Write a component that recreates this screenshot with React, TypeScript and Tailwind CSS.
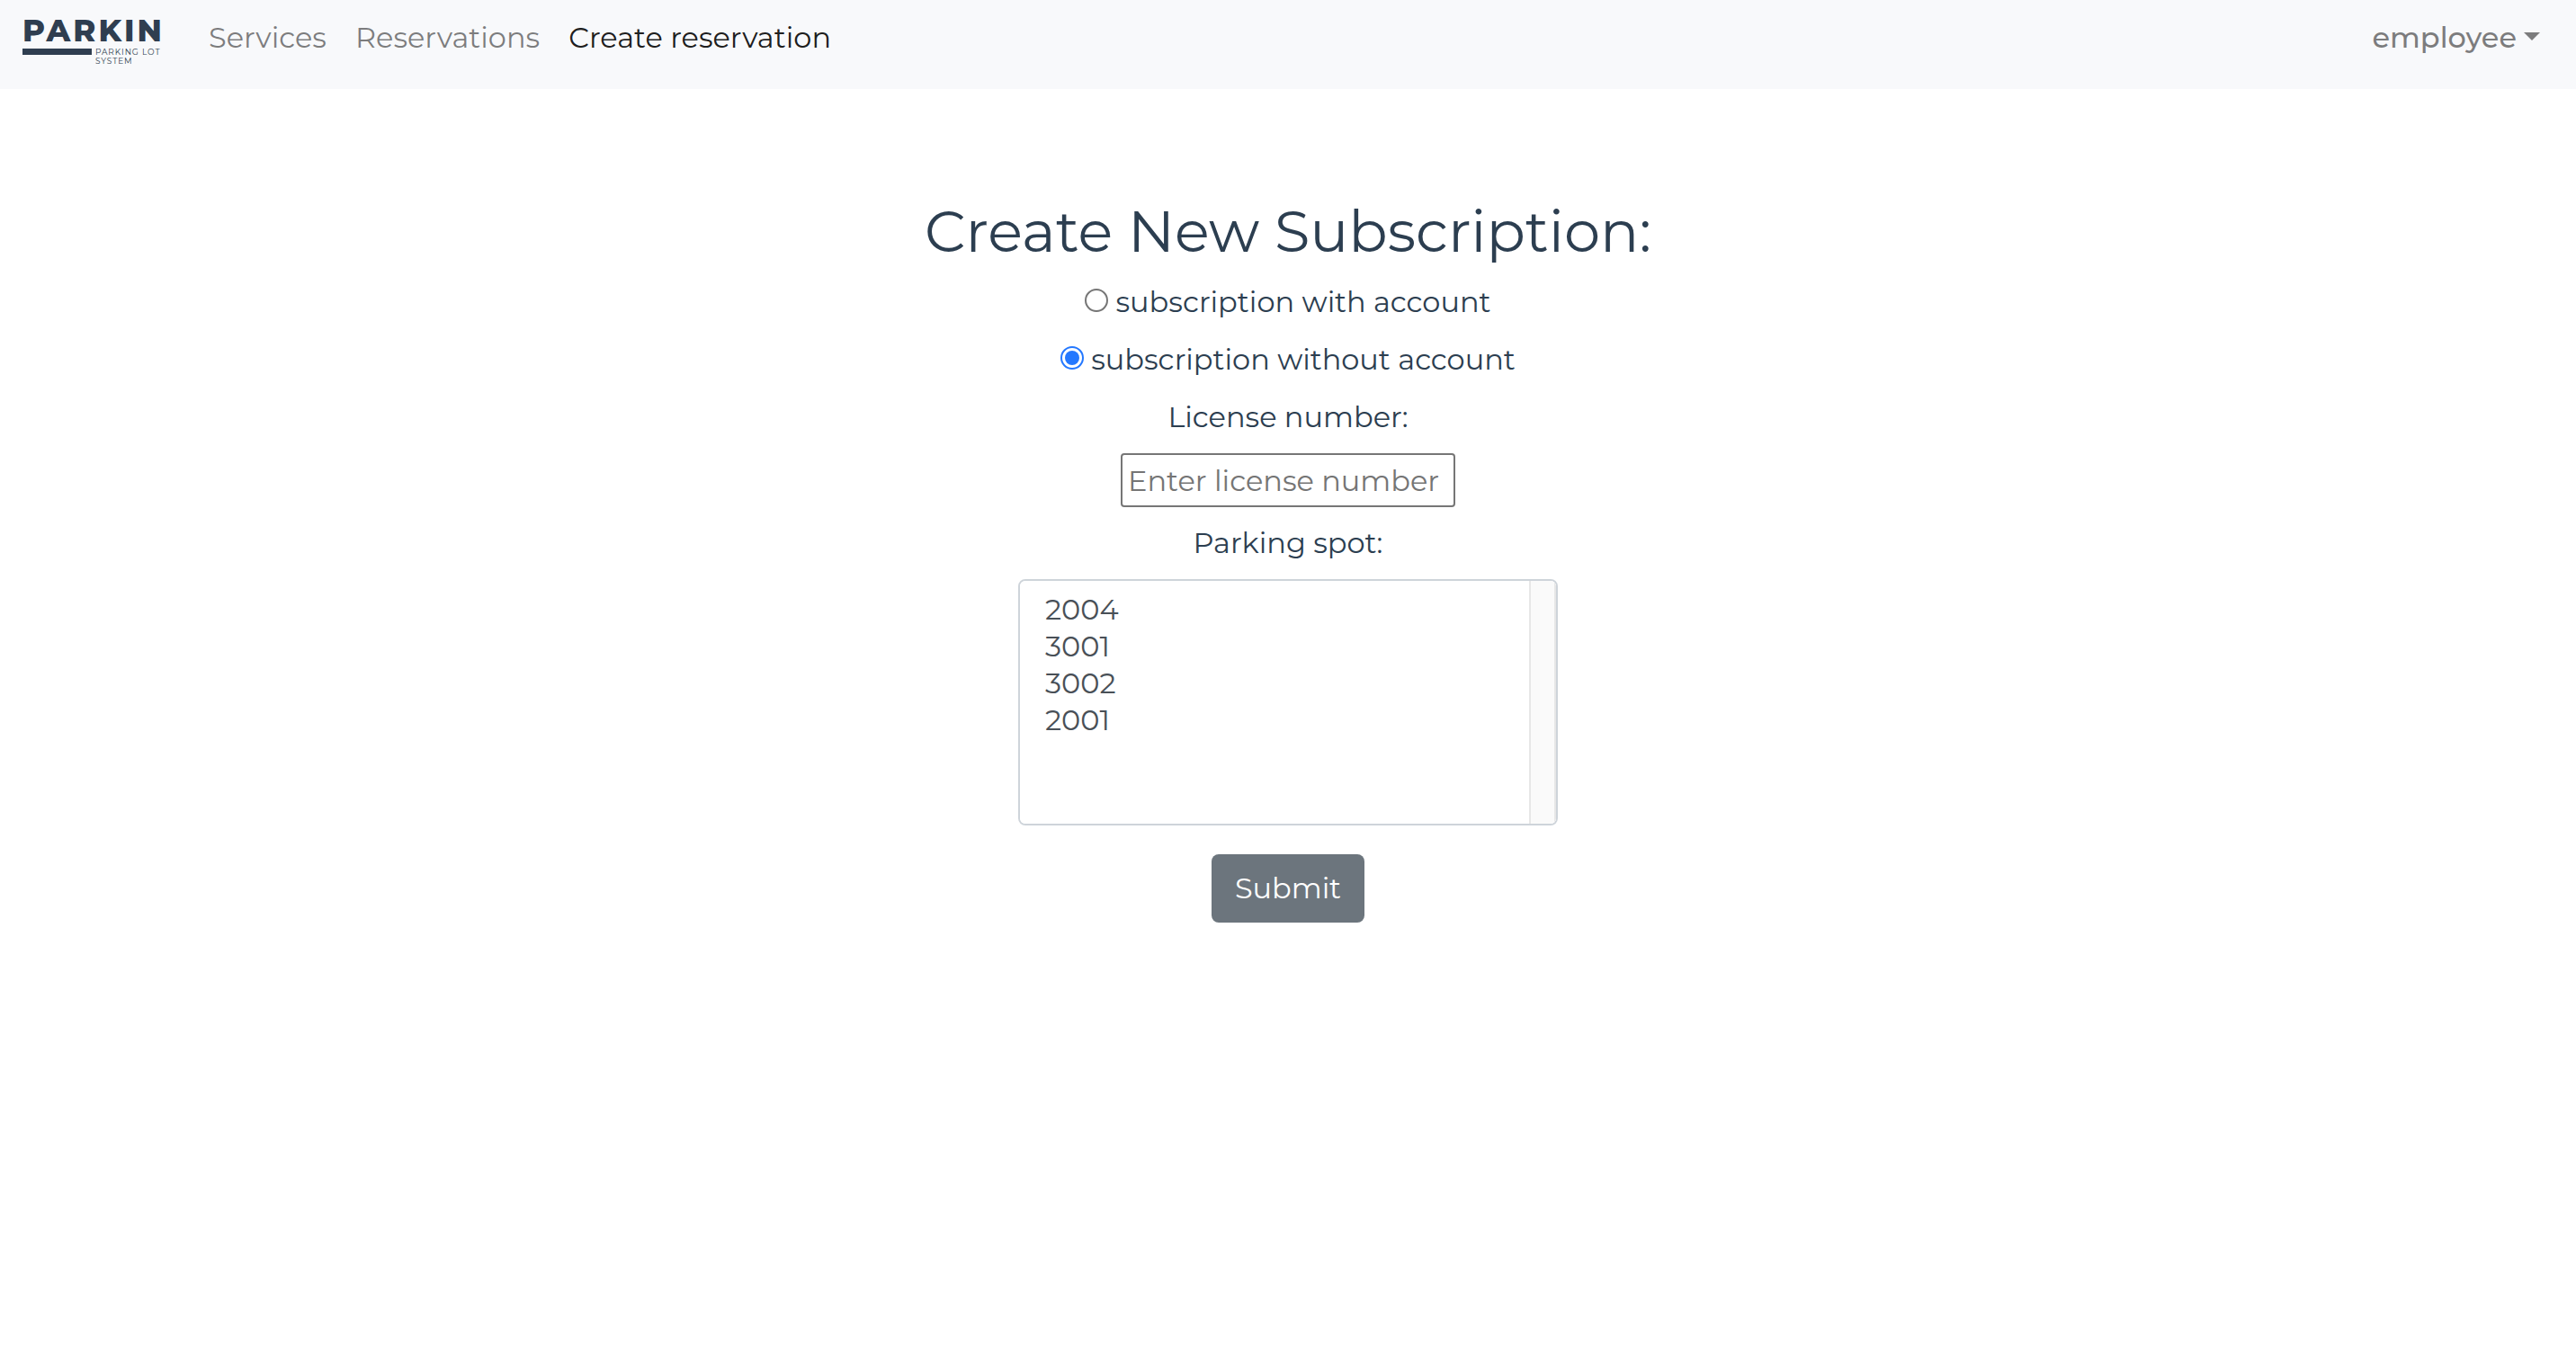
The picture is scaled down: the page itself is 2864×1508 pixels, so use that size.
import { useState } from "react";

const navLinks = [
  { label: "Services", active: false },
  { label: "Reservations", active: false },
  { label: "Create reservation", active: true },
];

const spots = ["2004", "3001", "3002", "2001"];

function Logo() {
  return (
    <svg viewBox="0 0 160 72" className="h-[72px] w-[160px]" role="img" aria-label="Parkin parking lot system">
      <g fill="#2f3e50">
        <text x="1" y="46" className="text-[34px] font-extrabold tracking-[3px]">PARKIN</text>
        <rect x="1" y="54" width="77" height="7" />
        <text x="82" y="61" className="text-[9px] tracking-widest">PARKING LOT</text>
        <text x="82" y="71" className="text-[9px] tracking-widest">SYSTEM</text>
      </g>
    </svg>
  );
}

function Navbar() {
  return (
    <nav className="flex h-[99px] items-start bg-[#f8f9fb] pr-10 pl-6">
      <a href="#home" className="mr-12">
        <Logo />
      </a>
      <ul className="mt-[18px] flex gap-8">
        {navLinks.map(({ label, active }) => (
          <li key={label}>
            <a
              href={"#" + label.toLowerCase().replace(" ", "-")}
              aria-current={active ? "page" : undefined}
              className={active ? "text-black/90" : "text-black/50"}
            >
              {label}
            </a>
          </li>
        ))}
      </ul>
      <button type="button" className="mt-[18px] ml-auto flex items-center gap-2 font-medium text-black/50">
        employee
        <svg viewBox="0 0 18 9" className="mb-1 h-[9px] w-[18px] fill-current" aria-hidden="true">
          <path d="M0 0h18l-9 9z" />
        </svg>
      </button>
    </nav>
  );
}

export default function App() {
  const [kind, setKind] = useState("without");
  return (
    <div className="min-h-screen bg-white font-['Montserrat','Inter',sans-serif] text-[32px] leading-[48px] text-[#2c3e50]">
      <Navbar />
      <main className="pt-[120px]">
        <form className="flex flex-col items-center gap-4" onSubmit={(e) => e.preventDefault()}>
          <h1 className="text-[64px] leading-[77px]">Create New Subscription:</h1>
          {["with", "without"].map((value) => (
            <label key={value} className="flex items-center gap-2">
              <input
                type="radio"
                name="kind"
                value={value}
                checked={kind === value}
                onChange={() => setKind(value)}
                className="mb-1 size-[26px] appearance-none rounded-full border-2 border-[#767676] bg-white bg-clip-content p-[3px] checked:border-[#2478ff] checked:bg-[#2478ff]"
              />
              subscription {value} account
            </label>
          ))}
          <label htmlFor="license">License number:</label>
          <input
            id="license"
            type="text"
            placeholder="Enter license number"
            className="h-[60px] w-[372px] rounded-sm border-2 border-[#767676] px-1.5 placeholder:text-[#757575] placeholder:opacity-100"
          />
          <label htmlFor="spot">Parking spot:</label>
          <div className="relative flex w-[600px] overflow-hidden rounded-lg border-2 border-[#ced4da]">
            <select id="spot" multiple className="h-[270px] w-full bg-white px-6 py-3 text-[#495057]">
              {spots.map((spot) => (
                <option key={spot} className="h-[41px] px-1 py-0 leading-[41px]">
                  {spot}
                </option>
              ))}
            </select>
            <div className="absolute inset-y-0 right-0 w-[30px] border-x-2 border-[#e7e7e7] bg-[#fafafa]" aria-hidden="true" />
          </div>
          <button type="submit" className="mt-4 h-[76px] rounded-lg bg-[#6c757d] px-[26px] text-white">
            Submit
          </button>
        </form>
      </main>
    </div>
  );
}
